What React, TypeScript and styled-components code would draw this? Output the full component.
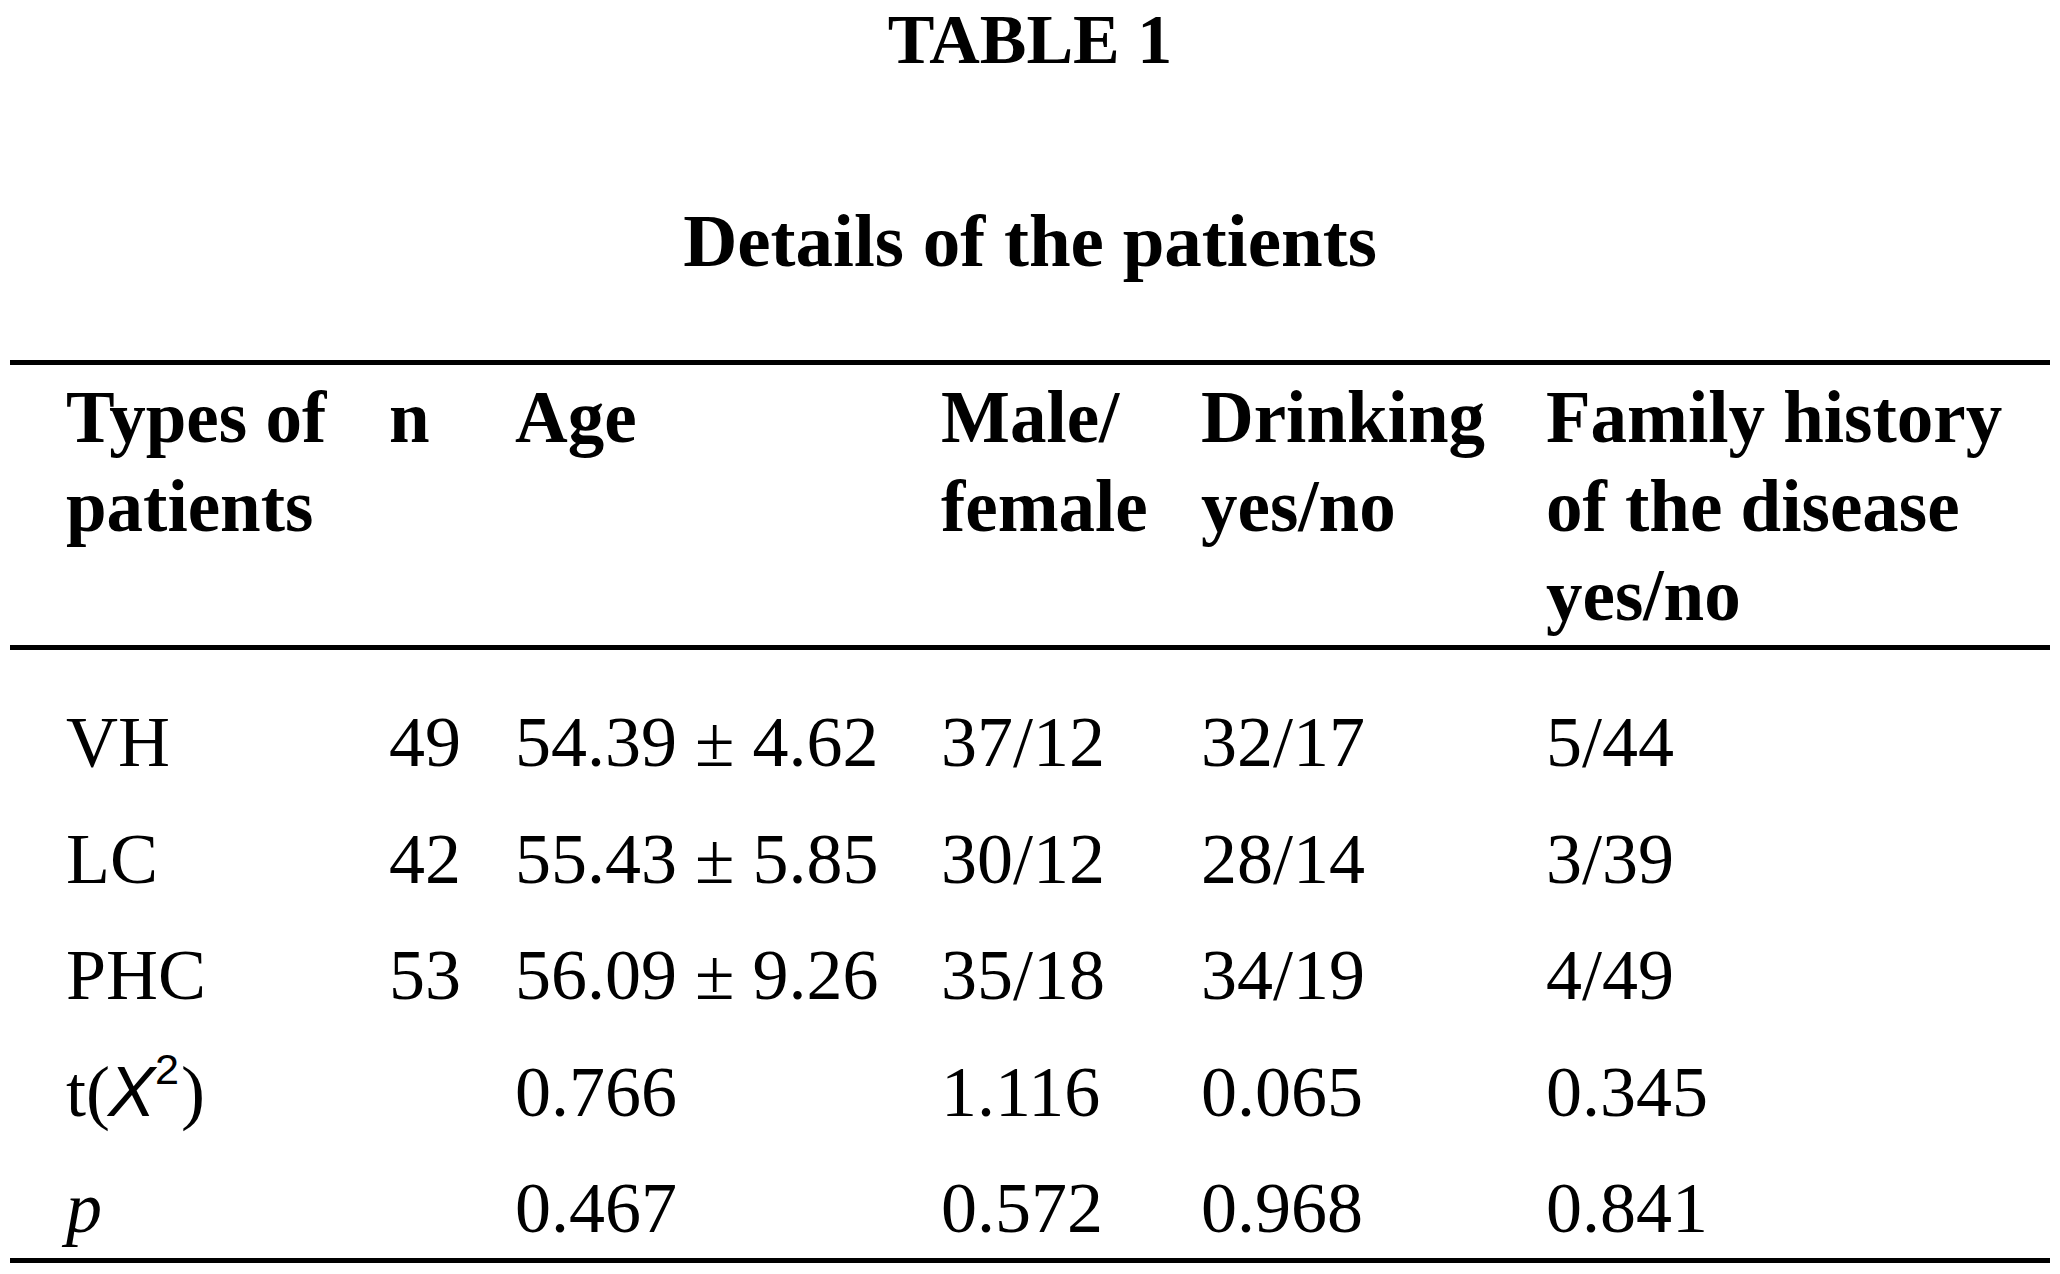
import React from 'react';
import styled, { createGlobalStyle } from 'styled-components';

const GlobalStyle = createGlobalStyle`
  html, body {
    margin: 0;
    padding: 0;
    background: #ffffff;
  }
  body {
    font-family: "Liberation Serif", "Times New Roman", serif;
    color: #000000;
  }
`;

const Page = styled.div`
  width: 2060px;
  height: 1274px;
  overflow: hidden;
  background: #ffffff;
`;

const Title = styled.h1`
  margin: 0;
  font-size: 70px;
  line-height: 80px;
  font-weight: 700;
  text-align: center;
`;

const Subtitle = styled.h2`
  margin: 118px 0 0;
  font-size: 75px;
  line-height: 86px;
  font-weight: 700;
  text-align: center;
`;

const Table = styled.div`
  margin: 76px 10px 0;
  border-top: 5px solid #000;
  border-bottom: 5px solid #000;
`;

const Row = styled.div<{ head?: boolean }>`
  display: grid;
  grid-template-columns: 323px 126px 426px 260px 345px 1fr;
  padding-left: 56px;
  font-size: ${p => (p.head ? '73px' : '72px')};
  font-weight: ${p => (p.head ? 700 : 400)};
  line-height: ${p => (p.head ? '89px' : '100px')};
  white-space: nowrap;
`;

const Head = styled.div`
  padding: 8px 0 5px;
  border-bottom: 5px solid #000;
`;

const Body = styled.div`
  display: flex;
  flex-direction: column;
  gap: 16.5px;
  padding-top: 42px;
`;

const Italic = styled.span`
  font-style: italic;
`;

const Chi = styled.span`
  font-family: "Liberation Sans", Arial, sans-serif;
  font-style: italic;
  font-size: 0.98em;
  margin: 0 0 0 -2px;
`;

const Sup = styled.sup`
  font-family: "Liberation Sans", Arial, sans-serif;
  font-size: 0.6em;
  line-height: 0;
  vertical-align: 0.72em;
  margin-right: 2px;
`;

const headers: React.ReactNode[] = [
  <>Types of<br />patients</>,
  'n',
  'Age',
  <>Male/<br />female</>,
  <>Drinking<br />yes/no</>,
  <>Family history<br />of the disease<br />yes/no</>,
];

const rows: React.ReactNode[][] = [
  ['VH', '49', '54.39 ± 4.62', '37/12', '32/17', '5/44'],
  ['LC', '42', '55.43 ± 5.85', '30/12', '28/14', '3/39'],
  ['PHC', '53', '56.09 ± 9.26', '35/18', '34/19', '4/49'],
  [<>t(<Chi>Χ</Chi><Sup>2</Sup>)</>, '', '0.766', '1.116', '0.065', '0.345'],
  [<Italic>p</Italic>, '', '0.467', '0.572', '0.968', '0.841'],
];

export default function App() {
  return (
    <Page>
      <GlobalStyle />
      <Title>TABLE 1</Title>
      <Subtitle>Details of the patients</Subtitle>
      <Table>
        <Head>
          <Row head>
            {headers.map((h, i) => (
              <div key={i}>{h}</div>
            ))}
          </Row>
        </Head>
        <Body>
          {rows.map((r, i) => (
            <Row key={i}>
              {r.map((c, j) => (
                <div key={j}>{c}</div>
              ))}
            </Row>
          ))}
        </Body>
      </Table>
    </Page>
  );
}
